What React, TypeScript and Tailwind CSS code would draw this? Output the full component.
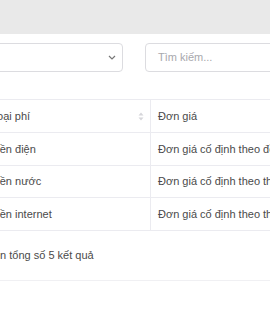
import React from "react";

const rows = [
  { name: "Tiền điện", price: "Đơn giá cố định theo đồng hồ" },
  { name: "Tiền nước", price: "Đơn giá cố định theo tháng" },
  { name: "Tiền internet", price: "Đơn giá cố định theo tháng" },
];

export default function App() {
  return (
    <div
      className="w-[270px] h-[330px] overflow-hidden bg-white text-[#4a4a4a]"
      style={{ fontFamily: '"Liberation Sans", Arial, sans-serif' }}
    >
      <div className="h-[34px] bg-[#e9e9e9]" />
      <div className="ml-[-20px] w-[340px]">
        <div className="mt-[9px] flex gap-[22px]">
          <div className="w-[143px] h-[29px] border border-[#dcdce0] rounded-[4px] flex items-center justify-end pr-[6px]">
            <svg width="8" height="5" viewBox="0 0 8 5">
              <path d="M1 1 L4 4 L7 1" fill="none" stroke="#777" strokeWidth="1.2" />
            </svg>
          </div>
          <div className="w-[170px] h-[29px] border border-[#dcdce0] rounded-[4px] flex items-center pl-[12px] text-[11px] text-[#a8a8ad]">
            Tìm kiếm...
          </div>
        </div>
        <div className="mt-[27px] border-t border-[#ebebf0]">
          <div className="flex h-[33px] border-b border-[#ebebf0] text-[11px]">
            <div className="w-[170px] flex items-center pl-[11px] pr-[6px] justify-between">
              <span>Loại phí</span>
              <svg width="6" height="9" viewBox="0 0 6 9">
                <path d="M3 0.5 L5.5 3.5 L0.5 3.5 Z" fill="#d6d6da" />
                <path d="M3 8.5 L5.5 5.5 L0.5 5.5 Z" fill="#d6d6da" />
              </svg>
            </div>
            <div className="flex-1 flex items-center pl-[7px] border-l border-[#ebebf0]">
              <span>Đơn giá</span>
            </div>
          </div>
          {rows.map((r) => (
            <div key={r.name} className="flex h-[32.5px] border-b border-[#ebebf0] text-[11px]">
              <div className="w-[170px] flex items-center pl-[11px]">
                <span>{r.name}</span>
              </div>
              <div className="flex-1 flex items-center pl-[7px] border-l border-[#ebebf0] whitespace-nowrap">
                <span>{r.price}</span>
              </div>
            </div>
          ))}
          <div className="h-[50px] border-b border-[#f0f0f3] flex items-center pl-[4px] text-[11px]">
            Trên tổng số 5 kết quả
          </div>
        </div>
      </div>
    </div>
  );
}
